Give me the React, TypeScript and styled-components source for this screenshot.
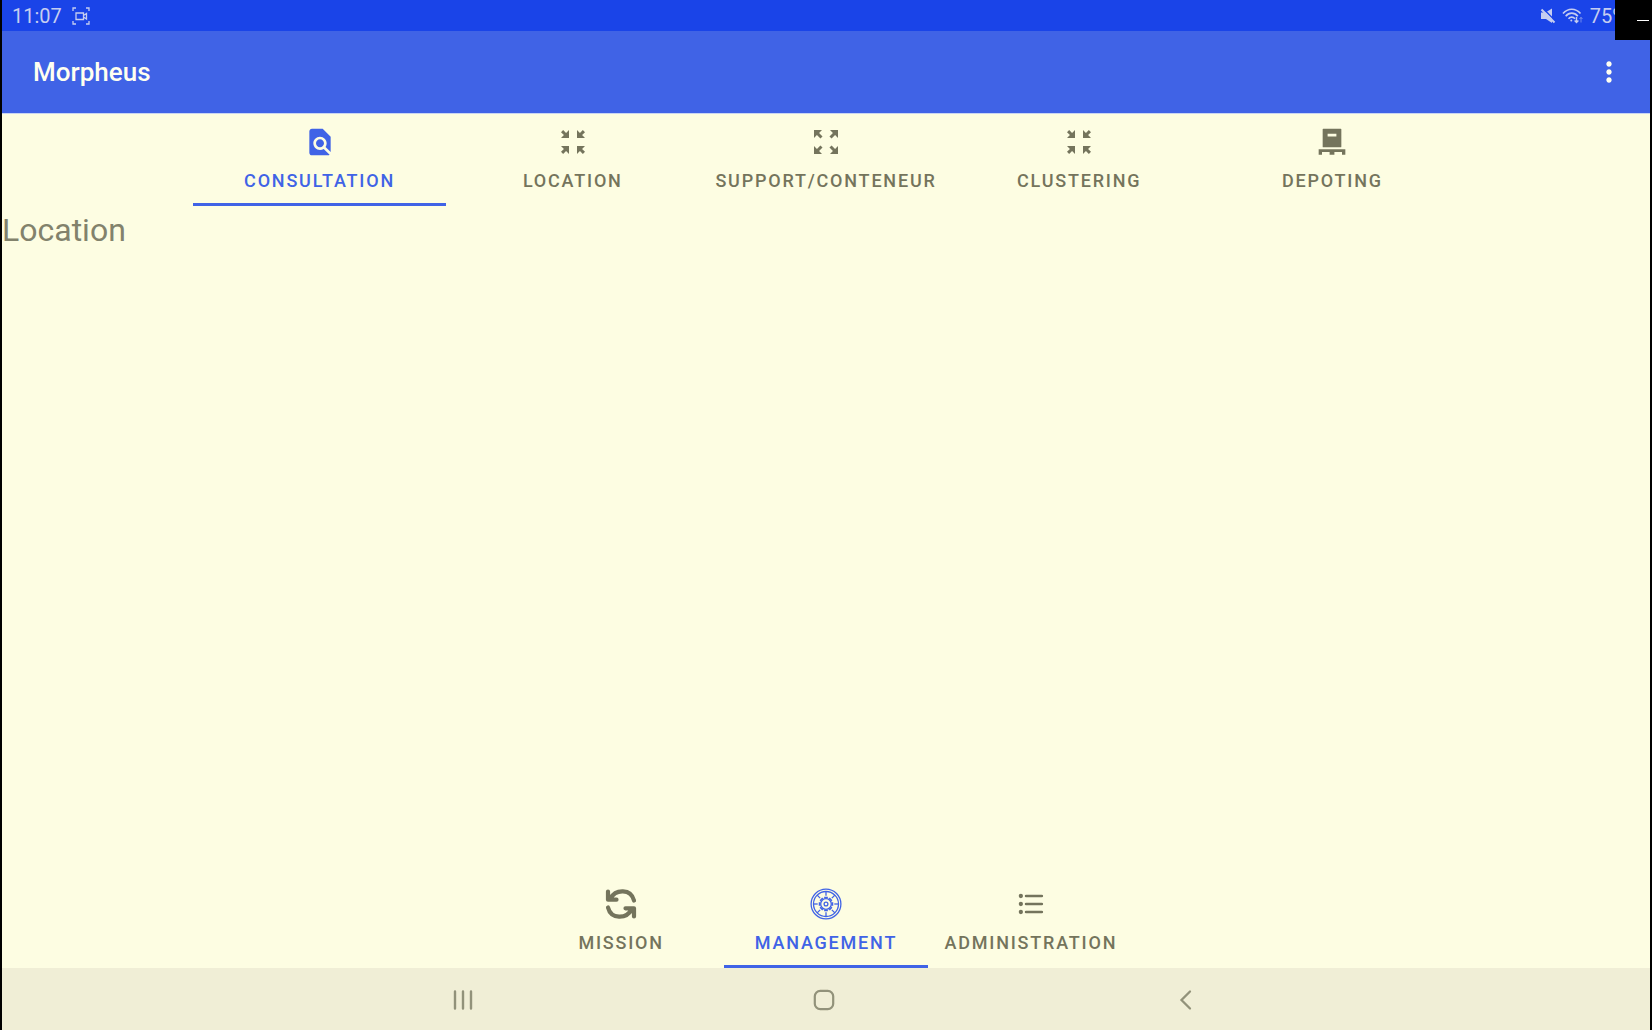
import React, { useState } from "react";
import styled, { createGlobalStyle } from "styled-components";
import { MdFindInPage, MdMoreVert } from "react-icons/md";

const color = {
  status: "#1a44e8",
  primary: "#4063e6",
  edge: "#c9d5f2",
  cream: "#fdfde2",
  navBar: "#f0eed6",
  onPrimary: "#fffff0",
  statusText: "#c5cdf0",
  muted: "#74745c",
  body: "#82826c",
  navIcon: "#92927a",
};

const GlobalStyle = createGlobalStyle`
  * { box-sizing: border-box; }
  body {
    margin: 0;
    background: #000;
    font-family: Roboto, "Noto Sans", sans-serif;
  }
  button {
    margin: 0;
    border: 0;
    background: none;
    font: inherit;
    color: inherit;
    cursor: pointer;
  }
  svg { display: block; flex: none; }
`;

const Screen = styled.div`
  position: relative;
  display: flex;
  flex-direction: column;
  min-height: 100vh;
  padding: 0 2px;
  background: #000;
`;

const StatusBar = styled.div`
  display: flex;
  align-items: center;
  justify-content: space-between;
  height: 31px;
  padding: 1px 23px 0 10px;
  background: ${color.status};
  color: ${color.statusText};
  font-size: 20px;
  line-height: 24px;
`;

const StatusGroup = styled.div<{ $gap: number }>`
  display: flex;
  align-items: center;
  gap: ${(p) => p.$gap}px;
`;

const AppBar = styled.header`
  display: flex;
  align-items: center;
  justify-content: space-between;
  height: 83px;
  padding: 0 25px 0 31px;
  border-bottom: 1px solid ${color.edge};
  background: ${color.primary};
  color: ${color.onPrimary};
`;

const Title = styled.h1`
  margin: 0;
  font-size: 26px;
  line-height: 32px;
  font-weight: 500;
`;

const MenuButton = styled.button`
  padding: 0;
`;

const Content = styled.main`
  display: flex;
  flex: 1;
  flex-direction: column;
  background: ${color.cream};
`;

const TabStrip = styled.div`
  display: grid;
  grid-auto-flow: column;
  grid-auto-columns: 1fr;
  align-self: center;
`;

const Tab = styled.button<{ $active: boolean }>`
  display: flex;
  flex-direction: column;
  align-items: center;
  gap: 11px;
  height: 92px;
  padding: 12px 16px 0;
  border-bottom: 3px solid ${(p) => (p.$active ? color.primary : "transparent")};
  color: ${(p) => (p.$active ? color.primary : color.muted)};
  font-size: 18px;
  line-height: 24px;
  font-weight: 500;
  letter-spacing: 0.1em;
  text-transform: uppercase;
  white-space: nowrap;
`;

const Panel = styled.section`
  flex: 1;
  padding: 5px 0;
  color: ${color.body};
  font-size: 32px;
  line-height: 38px;
`;

const NavBar = styled.nav`
  display: grid;
  grid-template-columns: repeat(3, 361px);
  justify-content: center;
  height: 62px;
  padding: 2px 4px 0 0;
  background: ${color.navBar};
  color: ${color.navIcon};
`;

const NavButton = styled.button`
  display: flex;
  align-items: center;
  justify-content: center;
  padding: 0;
`;

const MinimizeButton = styled.button`
  && {
    position: absolute;
    top: 0;
    right: 0;
    display: flex;
    align-items: center;
    justify-content: flex-end;
    width: 37px;
    height: 40px;
    padding: 0 3px;
    background: #000;
  }
`;

const Dash = styled.span`
  width: 12px;
  height: 1px;
  background: #fff;
`;

const CaptureIcon = () => (
  <svg width="18" height="18" viewBox="0 0 18 18" fill="none" stroke="currentColor" strokeWidth="1.3">
    <path d="M1 4V1h3M14 1h3v3M17 14v3h-3M4 17H1v-3" />
    <path d="M4 6h7.500v6.500H4zM11.500 8.500l3-2v5.500l-3-2" />
  </svg>
);

const MuteIcon = () => (
  <svg width="16" height="16" viewBox="0 0 16 16" fill="currentColor">
    <path d="M1 4.500h4.500L12 .5V15l-6-4H1z" />
    <path d="M3 .5l12.500 12.500" stroke={color.status} strokeWidth="1.500" />
    <path d="M1.500 1.500l13 13" stroke="currentColor" strokeWidth="2" />
  </svg>
);

const WifiIcon = () => (
  <svg width="22" height="18" viewBox="0 0 22 18" fill="none" stroke="currentColor" strokeWidth="1.700">
    <path d="M1 6.500C6 .8 13.500.8 18.500 6.500M3.700 9.200c3.500-4 8.600-4 12.100 0M6.500 11.800c2-2.200 4.500-2.200 6.500 0" />
    <circle cx="9.300" cy="13.500" r="1" fill="currentColor" stroke="none" />
    <path d="M14.500 10v5.500M12.600 13.500l1.900 2 1.900-2" strokeWidth="1.400" />
    <path d="M19 15.500v-5M17.500 12l1.500-1.700 1.500 1.700" strokeWidth="1" opacity=".5" />
  </svg>
);

const CollapseIcon = () => (
  <svg width="32" height="32" viewBox="0 0 24 24" fill="currentColor">
    <path d="M9 3v6H3l2.200-2.200L3 4.600 4.600 3l2.200 2.200zM15 3v6h6l-2.200-2.200L21 4.600 19.400 3l-2.200 2.200zM9 21v-6H3l2.200 2.200L3 19.400 4.600 21l2.200-2.200zM15 21v-6h6l-2.200 2.200 2.200 2.200-1.600 1.600-2.200-2.200z" />
  </svg>
);

const ExpandIcon = () => (
  <svg width="32" height="32" viewBox="0 0 24 24" fill="currentColor">
    <path d="M3 9V3h6L6.800 5.200l2.600 2.600-1.600 1.600-2.600-2.600zM21 9V3h-6l2.200 2.200-2.600 2.600 1.600 1.600 2.600-2.600zM3 15v6h6l-2.200-2.200 2.600-2.600-1.600-1.600-2.600 2.600zM21 15v6h-6l2.200-2.200-2.600-2.600 1.600-1.600 2.600 2.600z" />
  </svg>
);

const PalletIcon = () => (
  <svg width="32" height="32" viewBox="0 0 24 24" fill="currentColor" fillRule="evenodd">
    <path d="M5.500 2h13a.5.5 0 0 1 .5.500v13a.5.5 0 0 1-.5.500h-13a.5.5 0 0 1-.5-.500v-13a.5.5 0 0 1 .5-.500zM8.700 5.900v1.900h6.600V5.900z" />
    <path d="M2 17.500h20v4h-2.500v-2h-5.700v2h-3.600v-2H4.500v2H2z" />
  </svg>
);

const SyncIcon = () => (
  <svg width="32" height="32" viewBox="0 0 32 32" fill="none" stroke="currentColor" strokeWidth="4.200" strokeLinecap="round" strokeLinejoin="round">
    <path d="M5.500 10.500C10.500.8 26 .5 29 12.500" />
    <path d="M3 3.500v8.200h8.500" />
    <path d="M4 6l7 6H4z" fill="currentColor" strokeWidth="1" />
    <path d="M26.500 21.500C21.500 31.200 6 31.500 3 19.500" />
    <path d="M29 28.500v-8.200h-8.500" />
    <path d="M28 26l-7-6h7z" fill="currentColor" strokeWidth="1" />
  </svg>
);

const toothAngles = [0, 45, 90, 135, 180, 225, 270, 315];

const WheelIcon = () => (
  <svg width="32" height="32" viewBox="0 0 32 32" fill="none" stroke="currentColor" strokeWidth="1.300">
    <circle cx="16" cy="16" r="14.900" />
    <circle cx="16" cy="16" r="12.500" />
    <circle cx="16" cy="16" r="5.300" />
    <circle cx="16" cy="16" r="1.900" />
    {toothAngles.map((angle) => (
      <g key={angle} transform={`rotate(${angle} 16 16)`}>
        <path d="M16 3.500v4.200" />
        <path d="M14.800 10.500v-1.100h2.400v1.100" />
      </g>
    ))}
  </svg>
);

const ListIcon = () => (
  <svg width="32" height="32" viewBox="0 0 24 24" fill="none" stroke="currentColor" strokeWidth="2" strokeLinecap="round">
    <path d="M8.300 6h11.800M8.300 12h11.800M8.300 18h11.800" />
    <g fill="currentColor" stroke="none">
      <circle cx="4.400" cy="6" r="1.600" />
      <circle cx="4.400" cy="12" r="1.600" />
      <circle cx="4.400" cy="18" r="1.600" />
    </g>
  </svg>
);

const RecentsIcon = () => (
  <svg width="24" height="24" viewBox="0 0 24 24" stroke="currentColor" strokeWidth="2.400" strokeLinecap="round">
    <path d="M4 3.500v17M12 3.500v17M20 3.500v17" />
  </svg>
);

const HomeIcon = () => (
  <svg width="24" height="24" viewBox="0 0 24 24" fill="none" stroke="currentColor" strokeWidth="2.200">
    <rect x="2.800" y="2.800" width="18.400" height="18.400" rx="5.500" />
  </svg>
);

const BackIcon = () => (
  <svg width="24" height="24" viewBox="0 0 24 24" fill="none" stroke="currentColor" strokeWidth="2.300" strokeLinecap="round">
    <path d="M17 3.500L8.500 12l8.500 8.500" />
  </svg>
);

type TabItem = { label: string; icon: React.ReactNode };

const sections: TabItem[] = [
  { label: "Consultation", icon: <MdFindInPage size={32} /> },
  { label: "Location", icon: <CollapseIcon /> },
  { label: "Support/Conteneur", icon: <ExpandIcon /> },
  { label: "Clustering", icon: <CollapseIcon /> },
  { label: "Depoting", icon: <PalletIcon /> },
];

const areas: TabItem[] = [
  { label: "Mission", icon: <SyncIcon /> },
  { label: "Management", icon: <WheelIcon /> },
  { label: "Administration", icon: <ListIcon /> },
];

type TabsProps = { name: string; items: TabItem[]; initial: number };

const Tabs = ({ name, items, initial }: TabsProps) => {
  const [active, setActive] = useState(initial);
  return (
    <TabStrip role="tablist" aria-label={name}>
      {items.map((item, index) => (
        <Tab
          key={item.label}
          type="button"
          role="tab"
          aria-selected={index === active}
          $active={index === active}
          onClick={() => setActive(index)}
        >
          {item.icon}
          <span>{item.label}</span>
        </Tab>
      ))}
    </TabStrip>
  );
};

export default function App() {
  return (
    <>
      <GlobalStyle />
      <Screen>
        <StatusBar>
          <StatusGroup $gap={10}>
            <span>11:07</span>
            <CaptureIcon />
          </StatusGroup>
          <StatusGroup $gap={6}>
            <MuteIcon />
            <WifiIcon />
            <span>75%</span>
          </StatusGroup>
        </StatusBar>
        <AppBar>
          <Title>Morpheus</Title>
          <MenuButton type="button" aria-label="More options">
            <MdMoreVert size={32} />
          </MenuButton>
        </AppBar>
        <Content>
          <Tabs name="Sections" items={sections} initial={0} />
          <Panel>Location</Panel>
          <Tabs name="Areas" items={areas} initial={1} />
        </Content>
        <NavBar>
          <NavButton type="button" aria-label="Recents"><RecentsIcon /></NavButton>
          <NavButton type="button" aria-label="Home"><HomeIcon /></NavButton>
          <NavButton type="button" aria-label="Back"><BackIcon /></NavButton>
        </NavBar>
        <MinimizeButton type="button" aria-label="Minimize"><Dash /></MinimizeButton>
      </Screen>
    </>
  );
}
